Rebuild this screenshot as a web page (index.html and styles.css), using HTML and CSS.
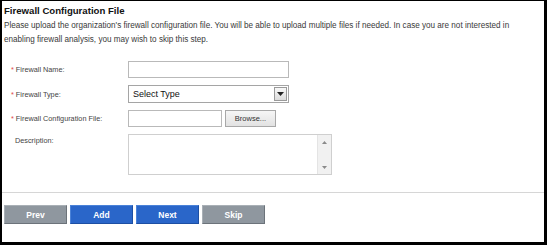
FILE: index.html
```html
<!DOCTYPE html>
<html lang="en">
<head>
    <meta charset="UTF-8">
    <title>Firewall Configuration File</title>
    <link rel="stylesheet" href="styles.css">
</head>
<body>
    <div class="frame">
        <div class="intro">
            <h2>Firewall Configuration File</h2>
            <p>Please upload the organization's firewall configuration file. You will be able to upload multiple files if needed. In case you are not interested in enabling firewall analysis, you may wish to skip this step.</p>
        </div>

        <div class="form">
            <div class="row">
                <label><span class="req">*</span> Firewall Name:</label>
                <div class="text-input wide"></div>
            </div>
            <div class="row">
                <label><span class="req">*</span> Firewall Type:</label>
                <div class="select">
                    <span class="select-text">Select Type</span>
                    <span class="select-arrow">
                        <svg width="7" height="4" viewBox="0 0 7 4"><path d="M0 0 H7 L3.5 4 Z" fill="#222"/></svg>
                    </span>
                </div>
            </div>
            <div class="row">
                <label><span class="req">*</span> Firewall Configuration File:</label>
                <div class="text-input short"></div>
                <button class="browse">Browse...</button>
            </div>
            <div class="row top">
                <label class="plain">Description:</label>
                <div class="textarea">
                    <div class="scroll">
                        <svg width="5" height="3" viewBox="0 0 5 3"><path d="M0 3 L2.5 0 L5 3 Z" fill="#8a8a8a"/></svg>
                        <svg width="5" height="3" viewBox="0 0 5 3"><path d="M0 0 H5 L2.5 3 Z" fill="#8a8a8a"/></svg>
                    </div>
                </div>
            </div>
        </div>

        <div class="actions">
            <button class="btn grey">Prev</button>
            <button class="btn blue">Add</button>
            <button class="btn blue">Next</button>
            <button class="btn grey">Skip</button>
        </div>
    </div>
</body>
</html>
```

FILE: styles.css
```css
body {
    margin: 0;
    padding: 0;
    background-color: #000;
    font-family: 'Liberation Sans', Arial, sans-serif;
}
.frame {
    box-sizing: border-box;
    width: 547px;
    height: 245px;
    background-color: white;
    border-style: solid;
    border-color: #000;
    border-width: 1px 3px 3px 2px;
    display: flex;
    flex-direction: column;
}
.intro {
    padding: 4px 2px 0 2px;
    height: 44px;
}
.intro h2 {
    margin: 0;
    font-size: 9.6px;
    font-weight: bold;
    color: #111;
    line-height: 12px;
}
.intro p {
    margin: 2px 0 0 0;
    padding-right: 6px;
    font-size: 8.15px;
    line-height: 14px;
    color: #3a3a3a;
}
.form {
    padding: 12px 0 0 9px;
    display: flex;
    flex-direction: column;
    gap: 7px;
}
.row {
    display: flex;
    align-items: center;
}
.row.top {
    align-items: flex-start;
}
.row label {
    width: 117px;
    font-size: 7.3px;
    color: #444;
}
.row label.plain {
    padding-left: 4px;
    width: 113px;
    margin-top: 2px;
}
.req {
    color: #e04848;
}
.text-input {
    box-sizing: border-box;
    height: 17px;
    border: 1px solid #b9b9b9;
    background: white;
}
.text-input.wide {
    width: 161px;
}
.text-input.short {
    width: 94px;
}
.select {
    box-sizing: border-box;
    width: 161px;
    height: 18px;
    border: 1px solid #a5a5a5;
    display: flex;
    align-items: center;
    justify-content: space-between;
    padding: 0 1px 0 4px;
}
.select-text {
    font-size: 9px;
    color: #111;
}
.select-arrow {
    box-sizing: border-box;
    width: 13px;
    height: 14px;
    border: 1px solid #9a9a9a;
    background: linear-gradient(#f8f8f8, #dcdcdc);
    display: flex;
    align-items: center;
    justify-content: center;
}
.browse {
    box-sizing: border-box;
    margin-left: 3px;
    width: 51px;
    height: 17px;
    padding: 0;
    font-family: inherit;
    font-size: 7.5px;
    color: #333;
    border: 1px solid #a8a8a8;
    background: linear-gradient(#f6f6f6, #e2e2e2);
}
.textarea {
    box-sizing: border-box;
    width: 204px;
    height: 41px;
    border: 1px solid #cfcfcf;
    display: flex;
    justify-content: flex-end;
}
.scroll {
    width: 13px;
    background: #f1f1f1;
    border-left: 1px solid #e4e4e4;
    display: flex;
    flex-direction: column;
    align-items: center;
    justify-content: space-between;
    padding: 6px 0 5px 0;
}
.actions {
    margin-top: 17px;
    border-top: 1px solid #d6d6d6;
    padding: 12px 0 0 2px;
    display: flex;
    gap: 3px;
}
.btn {
    box-sizing: border-box;
    width: 63px;
    height: 19px;
    padding: 0;
    font-family: inherit;
    font-size: 8.5px;
    font-weight: bold;
    color: white;
    border: 1px solid;
    cursor: pointer;
}
.btn.grey {
    background-color: #8f979f;
    border-color: #a9b0b6 #6c737a #6c737a #a9b0b6;
}
.btn.blue {
    background-color: #2a66c9;
    border-color: #4a82d8 #1d4fa3 #1d4fa3 #4a82d8;
}
```
